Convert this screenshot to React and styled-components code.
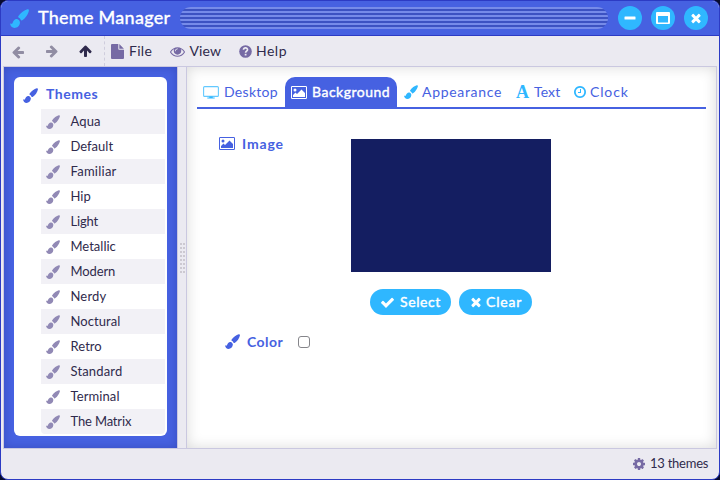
import React from "react";
import styled, { createGlobalStyle } from "styled-components";

const GlobalStyle = createGlobalStyle`
  * { box-sizing: border-box; }
  body { margin: 0; background: #070b2e; font-family: "Lato", "Open Sans", sans-serif; font-size: 14px; color: #2f2a4c; overflow: hidden; }
`;

const paths = {
  check: "M1671 566q0 40-28 68l-724 724-136 136q-28 28-68 28t-68-28l-136-136-362-362q-28-28-28-68t28-68l136-136q28-28 68-28t68 28l294 295 656-657q28-28 68-28t68 28l136 136q28 28 28 68z",
  times: "M1490 1322q0 40-28 68l-136 136q-28 28-68 28t-68-28l-294-294-294 294q-28 28-68 28t-68-28l-136-136q-28-28-28-68t28-68l294-294-294-294q-28-28-28-68t28-68l136-136q28-28 68-28t68 28l294 294 294-294q28-28 68-28t68 28l136 136q28 28 28 68t-28 68l-294 294 294 294q28 28 28 68z",
  eye: "M1664 960q-152-236-381-353 61 104 61 225 0 185-131.5 316.5t-316.5 131.5-316.5-131.5-131.5-316.5q0-121 61-225-229 117-381 353 133 205 333.5 326.5t434.5 121.5 434.5-121.5 333.5-326.5zm-720-384q0-20-14-34t-34-14q-125 0-214.5 89.5t-89.5 214.5q0 20 14 34t34 14 34-14 14-34q0-86 61-147t147-61q20 0 34-14t14-34zm848 384q0 34-20 69-140 230-376.5 368.5t-499.5 138.5-499.5-139-376.5-368q-20-35-20-69t20-69q140-229 376.5-368t499.5-139 499.5 139 376.5 368q20 35 20 69z",
  clock: "M1024 544v448q0 14-9 23t-23 9h-320q-14 0-23-9t-9-23v-64q0-14 9-23t23-9h224v-352q0-14 9-23t23-9h64q14 0 23 9t9 23zm416 352q0-148-73-273t-198-198-273-73-273 73-198 198-73 273 73 273 198 198 273 73 273-73 198-198 73-273zm224 0q0 209-103 385.5t-279.5 279.5-385.5 103-385.5-103-279.5-279.5-103-385.5 103-385.5 279.5-279.5 385.5-103 385.5 103 279.5 279.5 103 385.5z",
  arrow: "M1664 896v128q0 53-32.5 90.5t-84.5 37.5h-704l293 294q38 36 38 90t-38 90l-75 76q-37 37-90 37-52 0-91-37l-651-652q-37-37-37-90 0-52 37-91l651-650q38-38 91-38 52 0 90 38l75 74q38 38 38 91t-38 91l-293 293h704q52 0 84.5 37.5t32.5 90.5z",
  cog: "M1152 896q0-106-75-181t-181-75-181 75-75 181 75 181 181 75 181-75 75-181zm512-109v222q0 12-8 23t-20 13l-185 28q-19 54-39 91 35 50 107 138 10 12 10 25t-9 23q-27 37-99 108t-94 71q-12 0-26-9l-138-108q-44 23-91 38-16 136-29 186-7 28-36 28h-222q-14 0-24.5-8.5t-11.5-21.5l-28-184q-49-16-90-37l-141 107q-10 9-25 9-14 0-25-11-126-114-165-168-7-10-7-23 0-12 8-23 15-21 51-66.5t54-70.5q-27-50-41-99l-183-27q-13-2-21-12.5t-8-23.5v-222q0-12 8-23t19-13l186-28q14-46 39-92-40-57-107-138-10-12-10-24 0-10 9-23 26-36 98.5-107.5t94.5-71.5q13 0 26 10l138 107q44-23 91-38 16-136 29-186 7-28 36-28h222q14 0 24.5 8.5t11.5 21.5l28 184q49 16 90 37l142-107q9-9 24-9 13 0 25 10 129 119 165 170 7 8 7 22 0 12-8 23-15 21-51 66.5t-54 70.5q26 50 41 98l183 28q13 2 21 12.5t8 23.5z",
};

const Svg = styled.svg`
  display: block;
  flex: none;
  fill: currentColor;
  transform: rotate(${(p) => p.$turn || 0}deg);
`;
const Glyph = ({ name, size, turn }) => (
  <Svg width={size} height={size} viewBox="0 0 1792 1792" $turn={turn}><path d={paths[name]} /></Svg>
);
const Brush = ({ size = 15 }) => (
  <Svg width={size} height={size} viewBox="0 0 16 16">
    <path d="M14.6.3c.8-.3 1.5.3 1.3 1.2-.5 2.6-2.9 6.5-5.6 8-.5.3-.9.2-1.2-.2-.3-.9-1-1.700-1.900-2.100-.4-.3-.4-.8-.1-1.300C8.900 3.400 12.100 1 14.600.3z" />
    <path d="M5.900 8.500c1.400.3 2.400 1.400 2.500 2.800C8.300 14.200 6 15.900 3.800 15.900 1.800 15.900.3 14.400 0 12c.9.7 1.700.7 2.200-.3.5-1.700 1.800-3.400 3.700-3.200z" />
  </Svg>
);
const Picture = () => (
  <Svg width="16" height="13" viewBox="0 0 16 13">
    <path fillRule="evenodd" d="M1.300 0h13.400A1.300 1.300 0 0 1 16 1.300v10.400a1.300 1.300 0 0 1-1.300 1.300H1.300A1.300 1.300 0 0 1 0 11.700V1.300A1.300 1.300 0 0 1 1.300 0zM1 1v11h14V1z" />
    <circle cx="4" cy="4" r="1.500" />
    <path d="M2 11V9l2.500-2.500L6 8l4.500-4.500L14 7v4z" />
  </Svg>
);
const Monitor = () => (
  <Svg width="16" height="13" viewBox="0 0 16 13">
    <rect x=".6" y=".6" width="14.800" height="9.800" rx="1" fill="none" stroke="currentColor" strokeWidth="1.100" opacity=".75" />
    <path d="M6.300 10.500h3.400v1h2v1.100H4.300v-1.100h2z" />
  </Svg>
);
const FileIcon = () => (
  <Svg width="13" height="15" viewBox="0 0 13 15">
    <path d="M1 0h6.300v4.700c0 .6.400 1 1 1H13V14a1 1 0 0 1-1 1H1a1 1 0 0 1-1-1V1a1 1 0 0 1 1-1zM8.300.1 12.900 4.700H8.300z" />
  </Svg>
);
const Help = () => (
  <Svg width="13" height="13" viewBox="0 0 13 13">
    <circle cx="6.500" cy="6.500" r="6.300" />
    <path d="M4.500 4.800C4.700 2.200 8.600 2.500 8.500 4.800c0 1.400-1.900 1.400-1.900 3" fill="none" stroke="#ebeaf1" strokeWidth="1.700" />
    <rect x="5.700" y="8.800" width="1.800" height="1.700" fill="#ebeaf1" />
  </Svg>
);
const MinIcon = () => <Svg width="12" height="4" viewBox="0 0 12 4"><rect x=".5" y=".5" width="11" height="3" rx=".5" /></Svg>;
const MaxIcon = () => (
  <Svg width="14" height="12" viewBox="0 0 14 12">
    <path fillRule="evenodd" d="M1 0h12a1 1 0 0 1 1 1v10a1 1 0 0 1-1 1H1a1 1 0 0 1-1-1V1a1 1 0 0 1 1-1zm1 4v6.500h10V4z" />
  </Svg>
);

const Window = styled.div`
  width: 720px;
  height: 480px;
  display: flex;
  flex-direction: column;
  border: 1px solid #2c3bc4;
  border-radius: 8px;
  background: #ebeaf1;
  overflow: hidden;
`;
const TitleBar = styled.header`
  height: 35px;
  flex: none;
  display: flex;
  align-items: center;
  padding: 0 10px 0 9px;
  background: #4661e1;
  border-bottom: 1px solid #2c3bc4;
  color: #2fb7ff;
`;
const Title = styled.h1`
  margin: -2px 0 0 9px;
  width: 142px;
  font-size: 18px;
  line-height: 34px;
  font-weight: 500;
  letter-spacing: ${(p) => p.$ls}px;
  white-space: nowrap;
  color: #fff;
  -webkit-text-stroke: 0.3px #fff;
`;
const Grip = styled.div`
  width: 428px;
  height: 22px;
  border-radius: 11px;
  background: repeating-linear-gradient(#768be9 0 2px, #3c52c2 2px 4px);
`;
const WindowButtons = styled.div`
  display: flex;
  gap: 9px;
  margin-left: 10px;
`;
const RoundButton = styled.button`
  display: flex;
  align-items: center;
  justify-content: center;
  width: 24px;
  height: 24px;
  padding: 0;
  border: 0;
  border-radius: 50%;
  background: #2fb7ff;
  color: #fff;
`;
const Text = styled.span`
  white-space: nowrap;
  margin-top: -2px;
  letter-spacing: ${(p) => p.$ls || 0}px;
`;
const MenuBar = styled.nav`
  height: 30px;
  flex: none;
  display: flex;
  align-items: center;
  color: #766aa4;
`;
const NavArrows = styled.div`
  width: 104px;
  height: 30px;
  flex: none;
  display: flex;
  align-items: center;
  gap: 20px;
  padding-left: 10px;
  border-right: 1px dashed #cfcddd;
`;
const Arrow = styled.span`
  width: 14px;
  padding-top: ${(p) => (p.$active ? 0 : 1)}px;
  color: ${(p) => (p.$active ? "#2f2a4c" : "#918da3")};
`;
const MenuItem = styled.span`
  display: flex;
  align-items: center;
  gap: ${(p) => p.$gap}px;
  width: ${(p) => p.$w}px;
  margin-left: ${(p) => p.$ml || 0}px;
  ${Text} { color: #2f2a4c; }
`;
const Body = styled.div`
  height: 383px;
  flex: none;
  display: flex;
  margin: 0 2px;
  border: 1px solid #cac8e0;
`;
const Sidebar = styled.aside`
  width: 173px;
  flex: none;
  padding: 10px;
  background: #4661e1;
  box-shadow: inset 0 0 10px rgba(0, 0, 60, 0.2);
`;
const Card = styled.div`
  width: 153px;
  height: 359px;
  padding: 4px 2px 2px 27px;
  border-radius: 6px;
  background: #fff;
  overflow: hidden;
`;
const CardHeading = styled.div`
  display: flex;
  align-items: center;
  gap: 8px;
  height: 28px;
  margin-left: -18px;
  color: #4661e1;
  font-weight: 700;
  ${Text} { margin-top: -3px; }
`;
const ThemeRow = styled.div`
  display: flex;
  align-items: center;
  gap: 10.5px;
  height: 25px;
  padding-left: 5px;
  font-size: 13px;
  background: ${(p) => (p.$odd ? "#f2f1f6" : "#fff")};
  &:last-child { border-radius: 0 0 4px 4px; }
  svg { color: #9189b5; }
`;
const Splitter = styled.div`
  width: 10px;
  flex: none;
  display: flex;
  align-items: center;
  justify-content: flex-end;
  border-left: 1px solid #cac8e0;
  border-right: 1px solid #cac8e0;
`;
const Dots = styled.div`
  width: 6px;
  height: 30px;
  background: repeating-linear-gradient(90deg, transparent 0 2px, #ebeaf1 2px 3px),
    repeating-linear-gradient(#ccc9d1 0 2px, #ebeaf1 2px 4px);
`;
const Main = styled.main`
  flex: 1;
  padding: 10px 10px 0 10px;
  background: #fff;
  box-shadow: inset 0 0 14px rgba(0, 0, 0, 0.15);
`;
const Tabs = styled.div`
  display: flex;
  height: 32px;
  border-bottom: 2px solid #4661e1;
`;
const Tab = styled.div`
  display: flex;
  align-items: center;
  gap: ${(p) => p.$gap || 5}px;
  width: ${(p) => p.$w}px;
  height: 30px;
  padding-left: ${(p) => p.$pl || 7}px;
  border-radius: 10px 10px 0 0;
  background: ${(p) => (p.$active ? "#4661e1" : "transparent")};
  color: ${(p) => (p.$active ? "#fff" : "#2fb7ff")};
  ${Text} {
    color: ${(p) => (p.$active ? "#fff" : "#4661e1")};
    -webkit-text-stroke: ${(p) => (p.$active ? "0.4px #fff" : "0")};
  }
`;
const LetterIcon = styled.span`
  width: 13px;
  font: 700 18px/18px "Liberation Serif", serif;
`;
const Row = styled.div`
  display: flex;
  align-items: flex-start;
  padding-top: ${(p) => p.$pt}px;
  padding-left: ${(p) => p.$pl}px;
`;
const FieldLabel = styled.div`
  display: flex;
  align-items: center;
  gap: ${(p) => p.$gap}px;
  width: ${(p) => p.$w}px;
  height: 17px;
  line-height: 17px;
  margin-top: ${(p) => p.$mt}px;
  color: #4661e1;
  font-weight: 700;
  ${Text} { margin-top: 0; }
`;
const Preview = styled.div`
  width: 200px;
  height: 133px;
  background: #141e61;
`;
const Buttons = styled.div`
  display: flex;
  gap: 8px;
  padding: 17px 0 0 173px;
`;
const Pill = styled.button`
  display: flex;
  align-items: center;
  gap: ${(p) => p.$gap}px;
  width: ${(p) => p.$w}px;
  height: 26px;
  padding: 0 0 0 10px;
  border: 0;
  border-radius: 13px;
  background: #2fb7ff;
  color: #fff;
  font: inherit;
  -webkit-text-stroke: 0.4px #fff;
`;
const Checkbox = styled.input`
  width: 12px;
  height: 12px;
  margin: 0;
  appearance: none;
  border: 1px solid #85858a;
  border-radius: 3px;
  background: #fff;
`;
const Footer = styled.footer`
  flex: 1;
  display: flex;
  align-items: center;
  gap: 4px;
  padding-left: 631px;
  font-size: 13px;
  svg { color: #766aa4; }
`;

const themes = [
  ["Aqua", 0.1], ["Default", 0], ["Familiar", 0.25], ["Hip", 0], ["Light", -0.15],
  ["Metallic", 0], ["Modern", -0.1], ["Nerdy", 0.15], ["Noctural", 0.05], ["Retro", 0.05],
  ["Standard", 0.15], ["Terminal", 0.1], ["The Matrix", -0.15],
];

export default function App() {
  return (
    <>
      <GlobalStyle />
      <Window>
        <TitleBar>
          <Brush size={19} />
          <Title $ls={0.25}>Theme Manager</Title>
          <Grip />
          <WindowButtons>
            <RoundButton><MinIcon /></RoundButton>
            <RoundButton><MaxIcon /></RoundButton>
            <RoundButton><Glyph name="times" size={14} /></RoundButton>
          </WindowButtons>
        </TitleBar>
        <MenuBar>
          <NavArrows>
            <Arrow><Glyph name="arrow" size={14} /></Arrow>
            <Arrow><Glyph name="arrow" size={14} turn={180} /></Arrow>
            <Arrow $active><Glyph name="arrow" size={14} turn={90} /></Arrow>
          </NavArrows>
          <MenuItem $w={59} $gap={5} $ml={6}><FileIcon /><Text $ls={0.3}>File</Text></MenuItem>
          <MenuItem $w={69} $gap={4.5}><Glyph name="eye" size={15} /><Text $ls={0.1}>View</Text></MenuItem>
          <MenuItem $w={60} $gap={4}><Help /><Text $ls={0.5}>Help</Text></MenuItem>
        </MenuBar>
        <Body>
          <Sidebar>
            <Card>
              <CardHeading><Brush /><Text $ls={0.55}>Themes</Text></CardHeading>
              {themes.map(([name, ls], i) => (
                <ThemeRow key={name} $odd={i % 2 === 0}><Brush size={14} /><Text $ls={ls}>{name}</Text></ThemeRow>
              ))}
            </Card>
          </Sidebar>
          <Splitter><Dots /></Splitter>
          <Main>
            <Tabs>
              <Tab $w={88} $pl={6}><Monitor /><Text $ls={0.3}>Desktop</Text></Tab>
              <Tab $w={112} $gap={5} $pl={6} $active><Picture /><Text $ls={0.5}>Background</Text></Tab>
              <Tab $w={112} $gap={4}><Brush size={14} /><Text $ls={0.68}>Appearance</Text></Tab>
              <Tab $w={57} $gap={5}><LetterIcon>A</LetterIcon><Text $ls={0.1}>Text</Text></Tab>
              <Tab $w={66} $gap={3}><Glyph name="clock" size={14} /><Text $ls={0.85}>Clock</Text></Tab>
            </Tabs>
            <Row $pt={30} $pl={22}>
              <FieldLabel $w={132} $gap={7} $mt={-4}><Picture /><Text $ls={0.85}>Image</Text></FieldLabel>
              <Preview />
            </Row>
            <Buttons>
              <Pill $w={81} $gap={5}><Glyph name="check" size={15} /><Text $ls={0.6}>Select</Text></Pill>
              <Pill $w={73} $gap={3}><Glyph name="times" size={14} /><Text $ls={0.8}>Clear</Text></Pill>
            </Buttons>
            <Row $pt={21} $pl={28}>
              <FieldLabel $w={73} $gap={7} $mt={-3}><Brush size={15} /><Text $ls={0.45}>Color</Text></FieldLabel>
              <Checkbox type="checkbox" />
            </Row>
          </Main>
        </Body>
        <Footer><Glyph name="cog" size={14} /><Text $ls={-0.25}>13 themes</Text></Footer>
      </Window>
    </>
  );
}
